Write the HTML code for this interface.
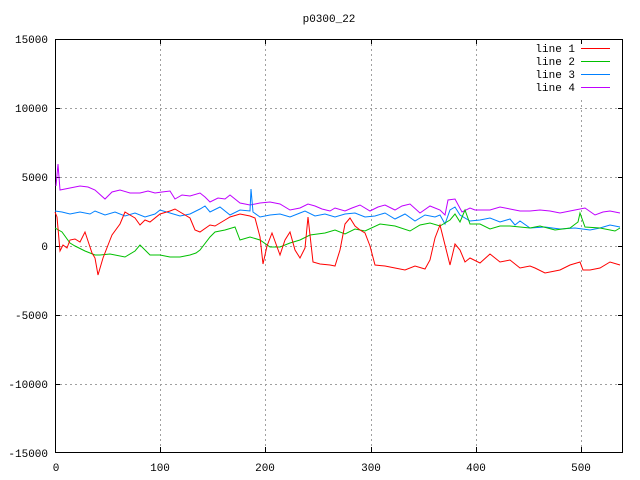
<!DOCTYPE html><html><head><style>body{margin:0;background:#fff}svg{display:block}text{font-family:"Liberation Mono",monospace;font-size:11px;fill:#000}</style></head><body>
<svg width="640" height="480" xmlns="http://www.w3.org/2000/svg">
<text x="329" y="22" text-anchor="middle">p0300_22</text>
<g stroke="#a0a0a0" stroke-dasharray="2,3" stroke-width="1">
<line x1="160.5" y1="39" x2="160.5" y2="452"/><line x1="265.5" y1="39" x2="265.5" y2="452"/><line x1="371.5" y1="39" x2="371.5" y2="452"/><line x1="476.5" y1="39" x2="476.5" y2="452"/><line x1="581.5" y1="100" x2="581.5" y2="452"/>
<line x1="55" y1="108.5" x2="623" y2="108.5"/><line x1="55" y1="177.5" x2="623" y2="177.5"/><line x1="55" y1="246.5" x2="623" y2="246.5"/><line x1="55" y1="315.5" x2="623" y2="315.5"/><line x1="55" y1="384.5" x2="623" y2="384.5"/>
</g>
<rect x="55.5" y="39.5" width="567" height="413" fill="none" stroke="#000"/>
<g stroke="#000"><line x1="55" y1="108.5" x2="60" y2="108.5"/><line x1="55" y1="177.5" x2="60" y2="177.5"/><line x1="55" y1="246.5" x2="60" y2="246.5"/><line x1="55" y1="315.5" x2="60" y2="315.5"/><line x1="55" y1="384.5" x2="60" y2="384.5"/>
<line x1="618" y1="108.5" x2="623" y2="108.5"/><line x1="618" y1="177.5" x2="623" y2="177.5"/><line x1="618" y1="246.5" x2="623" y2="246.5"/><line x1="618" y1="315.5" x2="623" y2="315.5"/><line x1="618" y1="384.5" x2="623" y2="384.5"/>
<line x1="160.5" y1="447" x2="160.5" y2="452"/><line x1="265.5" y1="447" x2="265.5" y2="452"/><line x1="371.5" y1="447" x2="371.5" y2="452"/><line x1="476.5" y1="447" x2="476.5" y2="452"/><line x1="581.5" y1="447" x2="581.5" y2="452"/>
<line x1="160.5" y1="39" x2="160.5" y2="44"/><line x1="265.5" y1="39" x2="265.5" y2="44"/><line x1="371.5" y1="39" x2="371.5" y2="44"/><line x1="476.5" y1="39" x2="476.5" y2="44"/><line x1="581.5" y1="39" x2="581.5" y2="44"/></g>
<g text-anchor="end"><text x="48" y="43">15000</text><text x="48" y="112">10000</text><text x="48" y="181">5000</text><text x="48" y="250">0</text><text x="48" y="319">-5000</text><text x="48" y="388">-10000</text><text x="48" y="457">-15000</text></g>
<g text-anchor="middle"><text x="56" y="471">0</text><text x="160" y="471">100</text><text x="265" y="471">200</text><text x="371" y="471">300</text><text x="476" y="471">400</text><text x="581" y="471">500</text></g>
<g text-anchor="end"><text x="575" y="52">line 1</text><text x="575" y="65">line 2</text><text x="575" y="78">line 3</text><text x="575" y="91">line 4</text></g>
<line x1="581" y1="48.5" x2="610" y2="48.5" stroke="#ff0000"/><line x1="581" y1="61.5" x2="610" y2="61.5" stroke="#00c000"/><line x1="581" y1="74.5" x2="610" y2="74.5" stroke="#0080ff"/><line x1="581" y1="87.5" x2="610" y2="87.5" stroke="#c000ff"/>
<g fill="none" stroke-width="1">
<polyline stroke="#c000ff" points="56,186 58,164 60,190 70,188 80,186 88,187 95,190 105,199 112,192 120,190 130,193 140,193 148,191 155,193 162,192 170,191 175,199 182,195 190,196 200,193 205,197 210,202 218,198 225,199 230,195 240,203 250,205 260,203 270,202 280,204 290,210 300,208 308,204 315,206 322,209 330,211 335,208 345,211 352,208 360,205 370,211 378,207 385,205 395,210 402,206 410,204 420,213 430,206 440,210 445,215 448,200 455,199 462,212 470,208 475,210 483,210 490,210 500,207 510,209 520,211 530,211 540,210 550,211 560,213 575,210 585,208 595,215 603,212 610,211 620,213"/>
<polyline stroke="#0080ff" points="55,211 62,212 70,214 80,212 90,214 95,211 105,215 115,212 125,216 135,213 145,217 155,214 160,210 170,213 180,216 190,214 200,209 205,206 210,212 220,207 230,215 240,210 250,211 251,189 253,212 260,217 270,215 280,214 290,217 300,213 305,211 315,216 325,214 335,217 345,214 355,213 365,217 375,216 385,213 395,219 405,214 415,221 425,215 435,217 440,215 445,224 450,210 455,207 460,215 470,221 480,220 490,218 500,222 510,219 515,225 520,221 530,228 545,227 560,229 575,228 590,230 600,228 610,225 620,227"/>
<polyline stroke="#00c000" points="55,228 62,232 70,243 75,246 85,251 95,255 100,255 110,254 125,257 135,251 140,245 145,250 150,255 160,255 170,257 180,257 190,255 196,253 200,250 210,237 215,232 225,230 235,227 240,240 250,237 260,240 270,247 280,247 290,243 300,240 310,235 325,233 335,230 345,234 355,229 365,231 380,224 395,226 410,231 420,225 430,223 440,226 450,220 455,214 460,222 465,210 470,224 480,224 490,229 500,226 510,226 520,227 530,228 540,226 555,230 570,228 578,222 580,213 585,227 600,228 615,231 620,228"/>
<polyline stroke="#ff0000" points="55,212 57,217 60,251 63,245 67,248 70,240 75,239 80,242 85,232 90,247 92,253 95,258 98,275 103,258 110,240 112,235 120,224 125,212 130,215 135,218 140,225 145,220 150,222 160,214 170,211 175,209 180,212 190,218 195,230 200,232 210,225 215,226 220,223 225,220 230,217 240,214 250,216 255,218 260,237 263,264 267,246 272,233 280,255 285,240 290,232 295,250 300,258 305,248 308,217 313,262 320,264 330,265 335,266 340,250 345,224 350,218 355,226 360,230 365,233 370,246 375,265 385,266 395,268 405,270 415,266 425,269 430,260 435,238 440,225 445,245 450,265 455,244 460,250 465,262 470,258 480,263 490,254 500,262 510,260 520,268 530,266 535,268 545,273 560,270 570,265 580,262 583,270 590,270 600,268 610,262 620,265"/>
</g>
</svg></body></html>
